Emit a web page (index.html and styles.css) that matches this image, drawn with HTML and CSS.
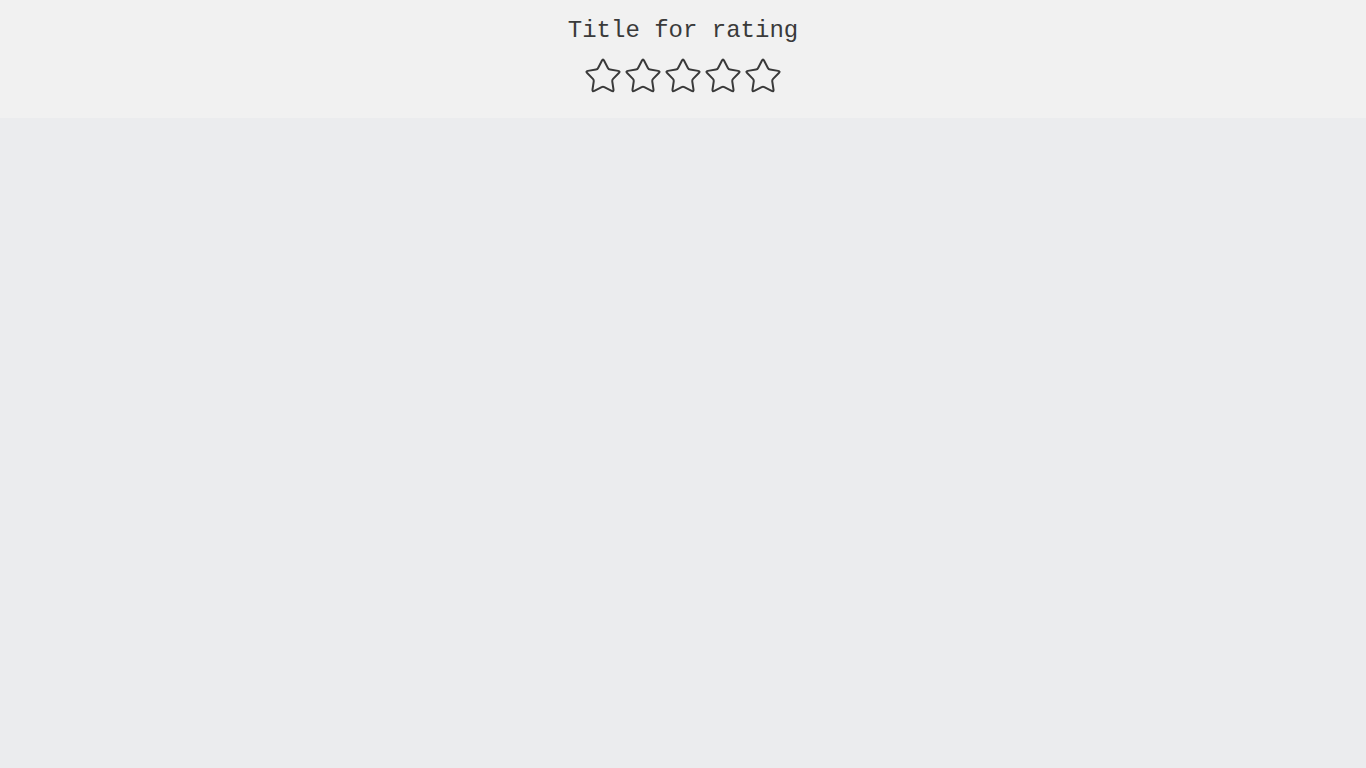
FILE: index.html
```html
<!DOCTYPE html>
<html lang="en">
<head>
<meta charset="utf-8">
<title>Rating</title>
<link rel="stylesheet" href="styles.css">
</head>
<body>
<header class="rating-header">
  <h1 class="rating-title">Title for rating</h1>
  <div class="stars">
    <svg class="star" viewBox="0 0 36 36" width="36" height="36"><path d="M16.85 3.72 Q18 1.5 19.15 3.72 L22.89 10.98 Q23.58 12.31 25.06 12.55 L33.12 13.88 Q35.59 14.28 33.83 16.06 L28.08 21.87 Q27.03 22.94 27.26 24.42 L28.49 32.5 Q28.87 34.97 26.64 33.85 L19.34 30.17 Q18 29.5 16.66 30.17 L9.36 33.85 Q7.13 34.97 7.51 32.5 L8.74 24.42 Q8.97 22.94 7.92 21.87 L2.17 16.06 Q0.41 14.28 2.88 13.88 L10.94 12.55 Q12.42 12.31 13.11 10.98 Z"/></svg>
    <svg class="star" viewBox="0 0 36 36" width="36" height="36"><path d="M16.85 3.72 Q18 1.5 19.15 3.72 L22.89 10.98 Q23.58 12.31 25.06 12.55 L33.12 13.88 Q35.59 14.28 33.83 16.06 L28.08 21.87 Q27.03 22.94 27.26 24.42 L28.49 32.5 Q28.87 34.97 26.64 33.85 L19.34 30.17 Q18 29.5 16.66 30.17 L9.36 33.85 Q7.13 34.97 7.51 32.5 L8.74 24.42 Q8.97 22.94 7.92 21.87 L2.17 16.06 Q0.41 14.28 2.88 13.88 L10.94 12.55 Q12.42 12.31 13.11 10.98 Z"/></svg>
    <svg class="star" viewBox="0 0 36 36" width="36" height="36"><path d="M16.85 3.72 Q18 1.5 19.15 3.72 L22.89 10.98 Q23.58 12.31 25.06 12.55 L33.12 13.88 Q35.59 14.28 33.83 16.06 L28.08 21.87 Q27.03 22.94 27.26 24.42 L28.49 32.5 Q28.87 34.97 26.64 33.85 L19.34 30.17 Q18 29.5 16.66 30.17 L9.36 33.85 Q7.13 34.97 7.51 32.5 L8.74 24.42 Q8.97 22.94 7.92 21.87 L2.17 16.06 Q0.41 14.28 2.88 13.88 L10.94 12.55 Q12.42 12.31 13.11 10.98 Z"/></svg>
    <svg class="star" viewBox="0 0 36 36" width="36" height="36"><path d="M16.85 3.72 Q18 1.5 19.15 3.72 L22.89 10.98 Q23.58 12.31 25.06 12.55 L33.12 13.88 Q35.59 14.28 33.83 16.06 L28.08 21.87 Q27.03 22.94 27.26 24.42 L28.49 32.5 Q28.87 34.97 26.64 33.85 L19.34 30.17 Q18 29.5 16.66 30.17 L9.36 33.85 Q7.13 34.97 7.51 32.5 L8.74 24.42 Q8.97 22.94 7.92 21.87 L2.17 16.06 Q0.41 14.28 2.88 13.88 L10.94 12.55 Q12.42 12.31 13.11 10.98 Z"/></svg>
    <svg class="star" viewBox="0 0 36 36" width="36" height="36"><path d="M16.85 3.72 Q18 1.5 19.15 3.72 L22.89 10.98 Q23.58 12.31 25.06 12.55 L33.12 13.88 Q35.59 14.28 33.83 16.06 L28.08 21.87 Q27.03 22.94 27.26 24.42 L28.49 32.5 Q28.87 34.97 26.64 33.85 L19.34 30.17 Q18 29.5 16.66 30.17 L9.36 33.85 Q7.13 34.97 7.51 32.5 L8.74 24.42 Q8.97 22.94 7.92 21.87 L2.17 16.06 Q0.41 14.28 2.88 13.88 L10.94 12.55 Q12.42 12.31 13.11 10.98 Z"/></svg>
  </div>
</header>
<main class="content"></main>
</body>
</html>
```
FILE: styles.css
```css
html, body {
  margin: 0;
  padding: 0;
  height: 100%;
}
body {
  background: #ebecee;
  font-family: "Liberation Mono", "DejaVu Sans Mono", monospace;
  display: flex;
  flex-direction: column;
}
.rating-header {
  background: #f1f1f1;
  padding: 17px 0 25px;
  display: flex;
  flex-direction: column;
  align-items: center;
}
.rating-title {
  margin: 0 0 12px;
  font-size: 24px;
  line-height: 28px;
  font-weight: normal;
  color: #3a3a3a;
}
.stars {
  display: flex;
  gap: 4px;
  height: 36px;
}
.star {
  display: block;
  overflow: visible;
}
.star path {
  fill: none;
  stroke: #3a3a3a;
  stroke-width: 2;
  stroke-linejoin: round;
}
.content {
  flex: 1;
}
```
